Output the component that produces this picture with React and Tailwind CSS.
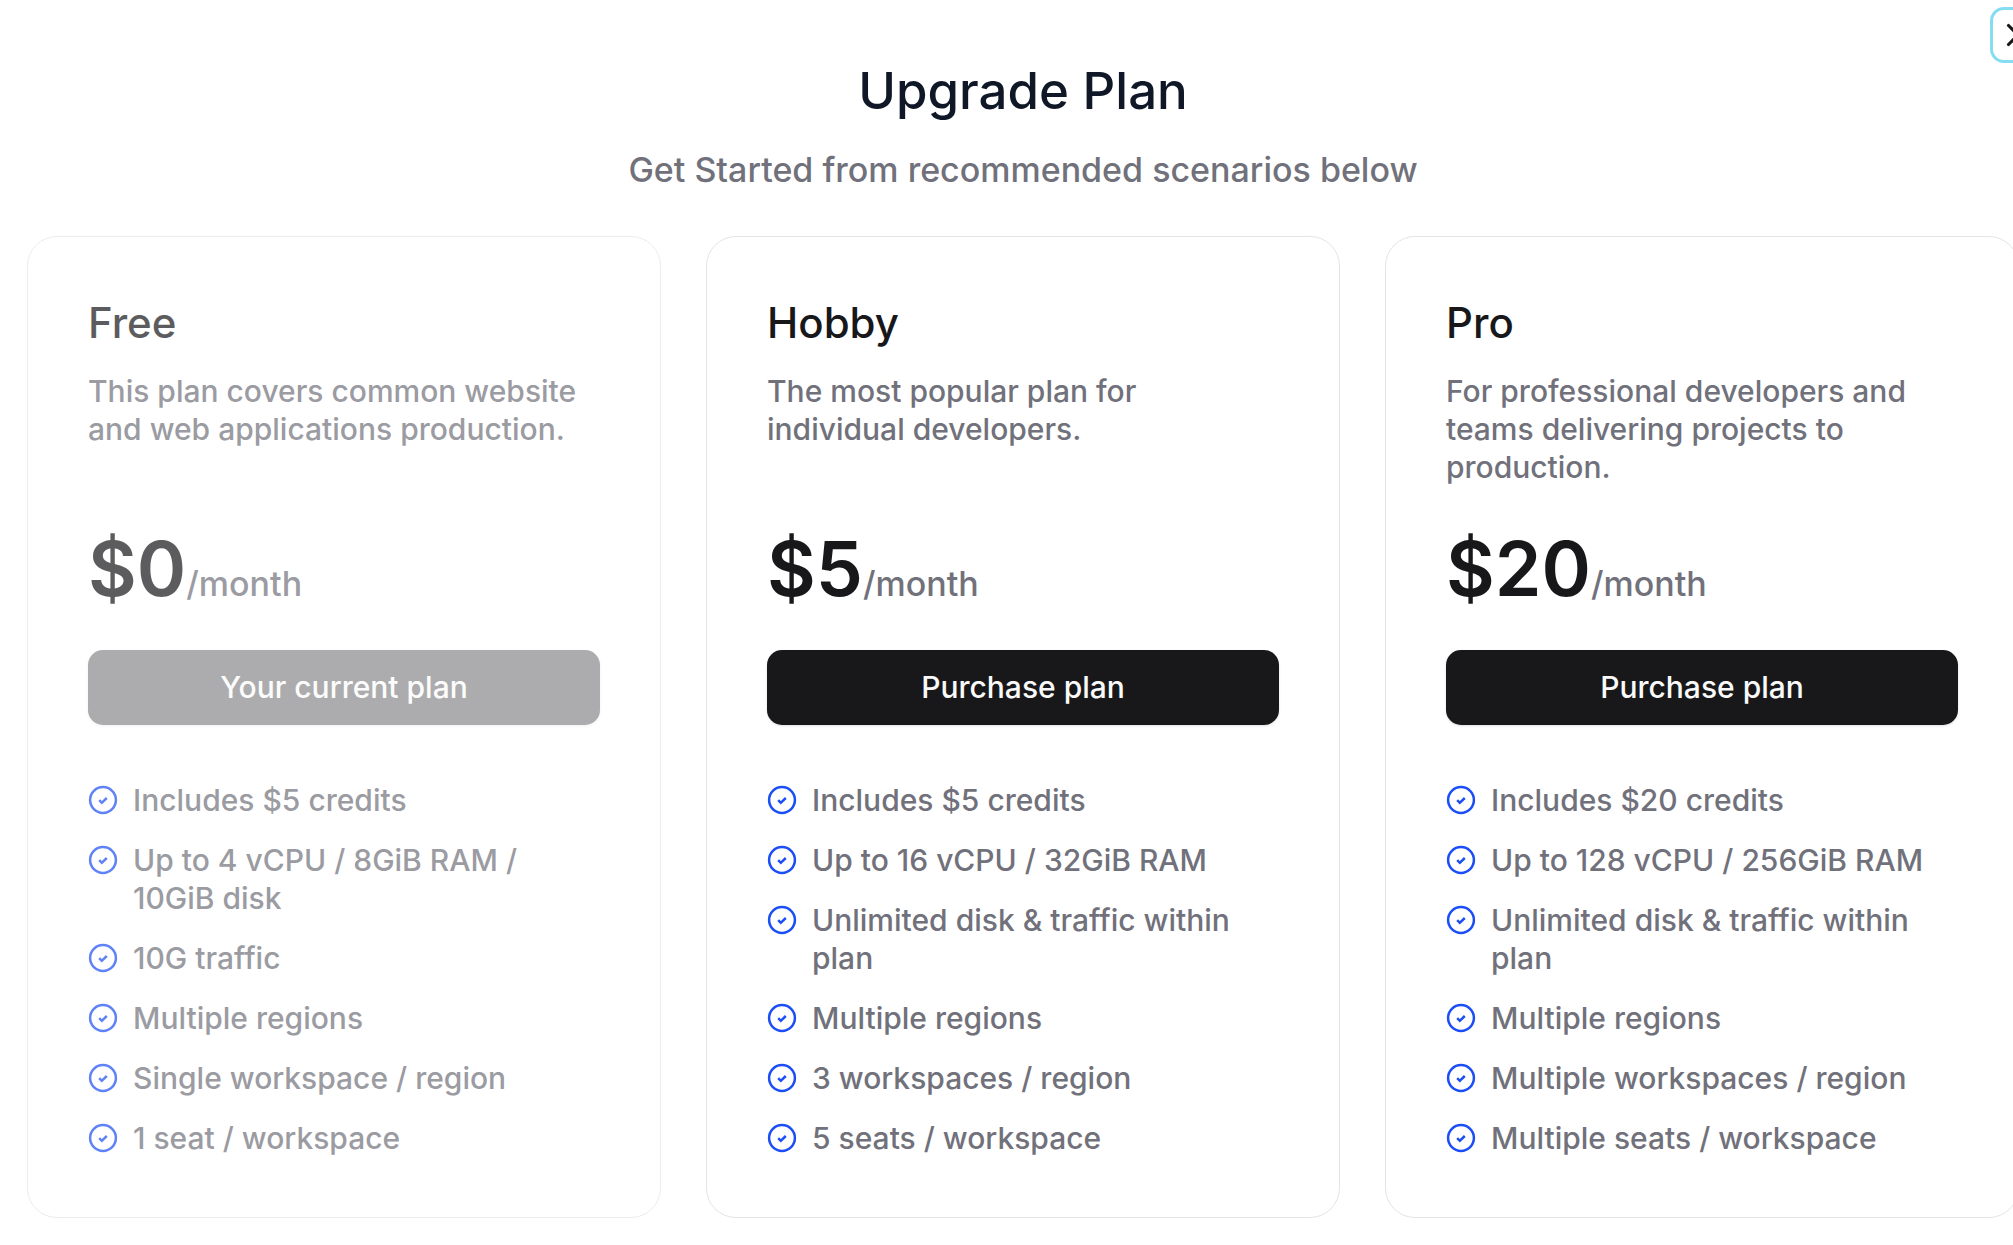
import { X } from "lucide-react";

const plans = [
    {
        name: "Free",
        description:
            "This plan covers common website and web applications production.",
        price: 0,
        current: true,
        features: [
            "Includes $5 credits",
            "Up to 4 vCPU / 8GiB RAM / 10GiB disk",
            "10G traffic",
            "Multiple regions",
            "Single workspace / region",
            "1 seat / workspace",
        ],
    },
    {
        name: "Hobby",
        description: "The most popular plan for individual developers.",
        price: 5,
        features: [
            "Includes $5 credits",
            "Up to 16 vCPU / 32GiB RAM",
            "Unlimited disk & traffic within plan",
            "Multiple regions",
            "3 workspaces / region",
            "5 seats / workspace",
        ],
    },
    {
        name: "Pro",
        description:
            "For professional developers and teams delivering projects to production.",
        price: 20,
        features: [
            "Includes $20 credits",
            "Up to 128 vCPU / 256GiB RAM",
            "Unlimited disk & traffic within plan",
            "Multiple regions",
            "Multiple workspaces / region",
            "Multiple seats / workspace",
        ],
    },
];

function CheckIcon() {
    return (
        <svg
            viewBox="0 0 30 30"
            className="w-[30px] h-[38px] shrink-0 text-[#1c4ef5]"
            fill="none"
            stroke="currentColor"
            strokeWidth="2.5"
            aria-hidden="true"
        >
            <circle cx="15" cy="15" r="12.9" />
            <path d="M11.2 15.2l2.6 2.6 5-4.8" />
        </svg>
    );
}

function PlanCard({ plan }) {
    return (
        <section
            className={`border border-zinc-200 rounded-[30px] p-[60px] ${
                plan.current ? "opacity-70" : ""
            }`}
        >
            <h2 className="text-[42px] leading-[52px] font-medium text-zinc-900">
                {plan.name}
            </h2>
            <p className="mt-[23px] min-h-[114px] text-[30px] leading-[38px] font-medium text-zinc-500">
                {plan.description}
            </p>
            <div className="mt-[45px] flex items-baseline">
                <span className="text-[75px] leading-[75px] font-semibold text-zinc-900">
                    ${plan.price}
                </span>
                <span className="text-[34px] leading-[38px] font-medium text-zinc-500">
                    /month
                </span>
            </div>
            <button
                type="button"
                disabled={plan.current}
                className="mt-11 w-full h-[75px] rounded-[15px] bg-zinc-900 text-zinc-50 text-[30px] font-medium shadow-sm disabled:opacity-50"
            >
                {plan.current ? "Your current plan" : "Purchase plan"}
            </button>
            <ul className="mt-14 flex flex-col gap-[22px]">
                {plan.features.map((f) => (
                    <li key={f} className="flex gap-[15px]">
                        <CheckIcon />
                        <span className="text-[30px] leading-[38px] font-medium text-zinc-500">
                            {f}
                        </span>
                    </li>
                ))}
            </ul>
        </section>
    );
}

export default function App() {
    return (
        <div className="overflow-hidden bg-white font-['Inter',sans-serif]">
            {/* the dialog runs a little past the right edge of the window */}
            <main className="relative w-[calc(100%+33px)] px-[27px] pt-[61px] pb-7">
                <button
                    type="button"
                    aria-label="Close"
                    className="absolute top-[7px] right-0 size-14 flex items-center justify-center rounded-[14px] border-3 border-[#86dcf0] text-zinc-900"
                >
                    <X size={38} strokeWidth={2} />
                </button>
                <header className="text-center">
                    <h1 className="text-[51px] leading-[60px] font-medium text-gray-900">
                        Upgrade Plan
                    </h1>
                    <p className="mt-[30px] text-[34px] leading-[38px] font-medium text-zinc-500">
                        Get Started from recommended scenarios below
                    </p>
                </header>
                <div className="mt-[47px] grid grid-cols-3 gap-[45px]">
                    {plans.map((plan) => (
                        <PlanCard key={plan.name} plan={plan} />
                    ))}
                </div>
            </main>
        </div>
    );
}
